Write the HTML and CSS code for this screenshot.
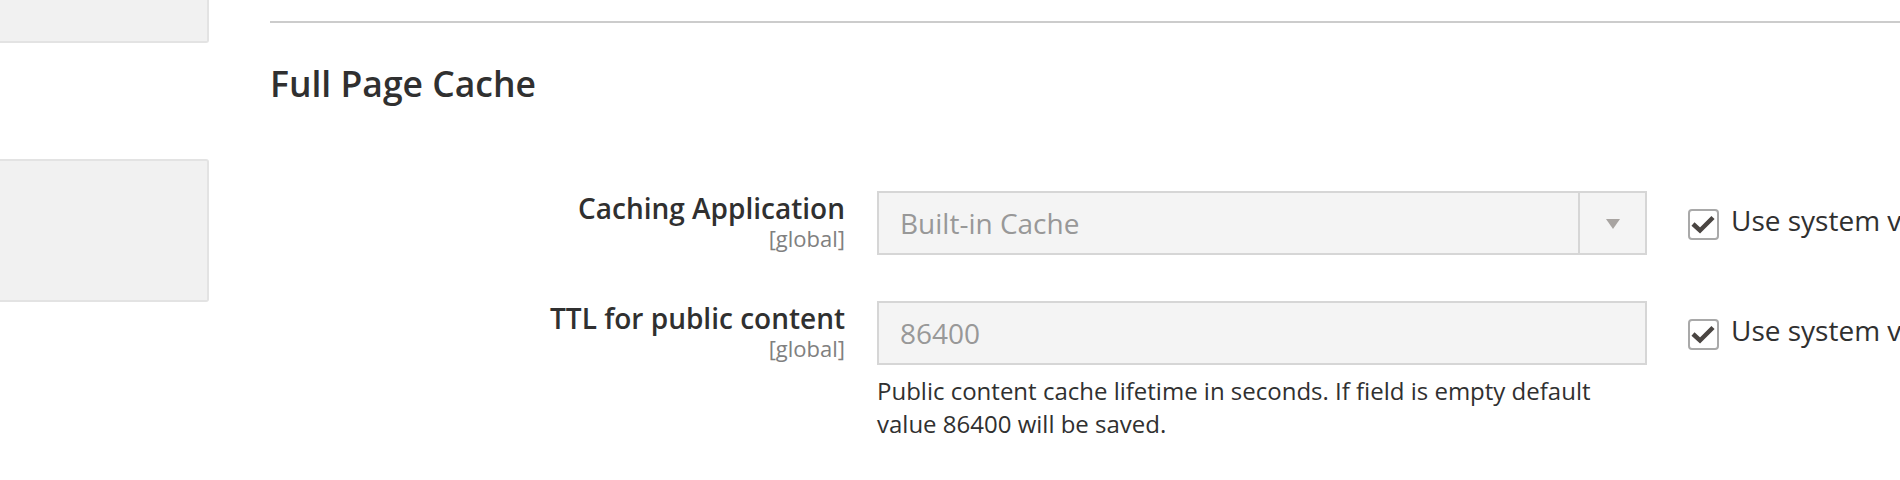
FILE: index.html
```html
<!DOCTYPE html>
<html lang="en">
<head>
<meta charset="utf-8">
<title>Full Page Cache</title>
<link rel="stylesheet" href="styles.css">
</head>
<body>
<div class="page">
  <aside class="sidebar">
    <div class="side-box side-box--top"></div>
    <div class="side-box side-box--menu"></div>
  </aside>
  <main class="content">
    <div class="divider"></div>
    <h2 class="section-title">Full Page Cache</h2>
    <div class="fields">
      <div class="field-row">
        <div class="field-label"><span class="label-text">Caching Application</span><span class="scope">[global]</span></div>
        <div class="field-control">
          <div class="control control--select">
            <span class="control-value">Built-in Cache</span>
            <span class="select-arrow"><span class="arrow-tri"></span></span>
          </div>
        </div>
        <div class="use-default">
          <span class="checkbox"><svg viewBox="0 0 27 27" width="27" height="27"><polyline points="3,13 10,19.5 23,6.5" fill="none" stroke="#4a4542" stroke-width="4.5"/></svg></span>
          <span class="use-label">Use system value</span>
        </div>
      </div>
      <div class="field-row">
        <div class="field-label"><span class="label-text">TTL for public content</span><span class="scope">[global]</span></div>
        <div class="field-control">
          <div class="control"><span class="control-value">86400</span></div>
          <div class="note">Public content cache lifetime in seconds. If field is empty default value 86400 will be saved.</div>
        </div>
        <div class="use-default">
          <span class="checkbox"><svg viewBox="0 0 27 27" width="27" height="27"><polyline points="3,13 10,19.5 23,6.5" fill="none" stroke="#4a4542" stroke-width="4.5"/></svg></span>
          <span class="use-label">Use system value</span>
        </div>
      </div>
    </div>
  </main>
</div>
</body>
</html>
```
FILE: styles.css
```css
html, body {
  margin: 0;
  padding: 0;
  background: #ffffff;
  overflow: hidden;
}

body {
  width: 1900px;
  height: 480px;
  font-family: "Open Sans", "Noto Sans", sans-serif;
  color: #303030;
}

.page {
  display: flex;
  align-items: flex-start;
}

.sidebar {
  width: 209px;
  flex: none;
  display: flex;
  flex-direction: column;
}

.side-box {
  box-sizing: border-box;
  background: #f1f1f1;
  border: 2px solid #e3e3e3;
  border-left: none;
}

.side-box--top {
  height: 43px;
  border-top: none;
  border-bottom-right-radius: 3px;
}

.side-box--menu {
  margin-top: 116px;
  height: 143px;
  border-radius: 0 3px 3px 0;
}

.content {
  flex: 1;
  min-width: 0;
  margin-left: 61px;
  padding-top: 21px;
}

.divider {
  height: 2px;
  background: #cccccc;
}

.section-title {
  margin: 40.1px 0 0;
  font-size: 35.5px;
  font-weight: 600;
  line-height: 40.8px;
  color: #303030;
}

.fields {
  margin-top: 87.1px;
  display: flex;
  flex-direction: column;
  gap: 46px;
}

.field-row {
  display: grid;
  grid-template-columns: 607px 770px auto;
  align-items: start;
}

.field-label {
  box-sizing: border-box;
  padding: 1px 32px 0 0;
  text-align: right;
  display: flex;
  flex-direction: column;
  align-items: flex-end;
}

.label-text {
  display: block;
  font-size: 28px;
  font-weight: 600;
  line-height: 33.6px;
  color: #303030;
}

.scope {
  display: block;
  font-size: 22px;
  font-weight: 400;
  line-height: 24.6px;
  color: #808080;
}

.control {
  box-sizing: border-box;
  height: 64px;
  display: flex;
  border: 2px solid #d6d6d6;
  background: #f4f4f4;
  color: #989898;
  font-size: 28px;
  line-height: 60px;
}

.control-value {
  flex: 1;
  padding-left: 21px;
  white-space: nowrap;
}

.select-arrow {
  width: 65px;
  flex: none;
  border-left: 2px solid #d6d6d6;
  display: flex;
  align-items: center;
  justify-content: center;
}

.arrow-tri {
  width: 0;
  height: 0;
  margin-top: 3px;
  border-left: 7.5px solid transparent;
  border-right: 7.5px solid transparent;
  border-top: 10px solid #a8a4a1;
}

.note {
  margin-top: 10px;
  font-size: 24px;
  line-height: 32.6px;
  color: #303030;
}

.use-default {
  margin-left: 41px;
  display: flex;
  align-items: flex-start;
  white-space: nowrap;
}

.checkbox {
  box-sizing: border-box;
  width: 31px;
  height: 31px;
  flex: none;
  margin-top: 18px;
  border: 2px solid #a9a9a9;
  border-radius: 4px;
  background: #ffffff;
  display: flex;
}

.checkbox svg {
  display: block;
}

.use-label {
  margin-left: 12px;
  margin-top: 13.3px;
  font-size: 28px;
  line-height: 33.6px;
  color: #303030;
}
```
